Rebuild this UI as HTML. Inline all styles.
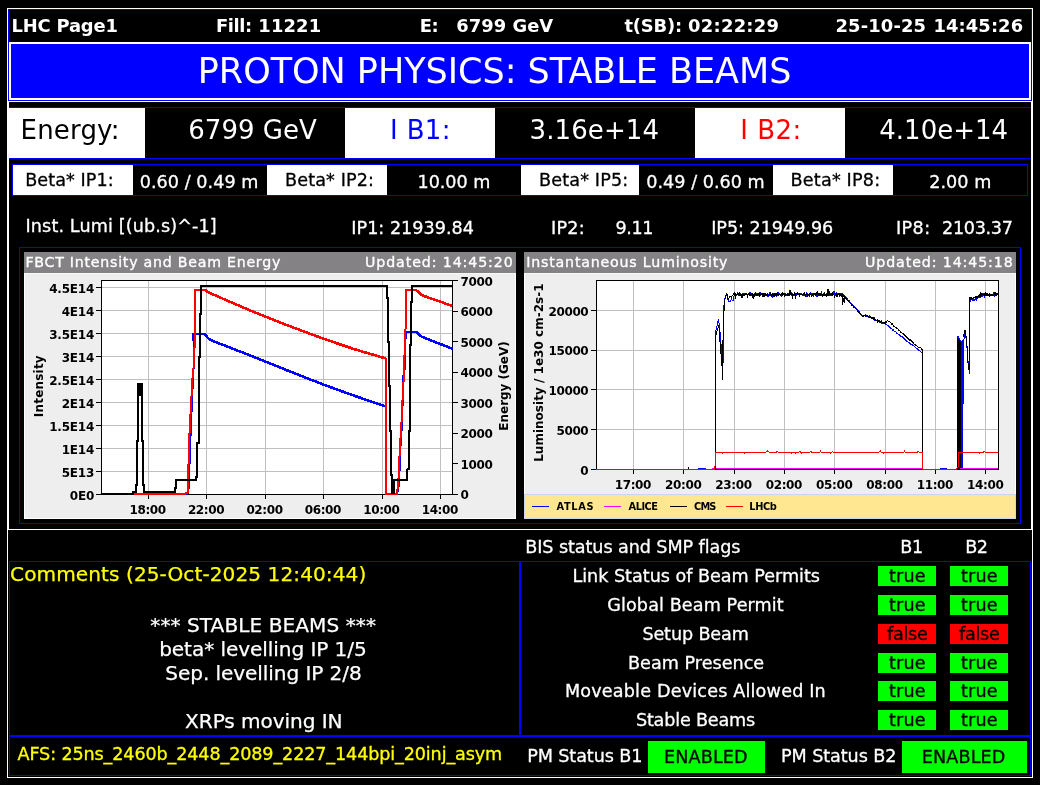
<!DOCTYPE html>
<html lang="en"><head><meta charset="utf-8"><title>LHC Page1</title>
<style>
html,body{margin:0;padding:0;background:#000;overflow:hidden}
svg{display:block;font-family:"DejaVu Sans","Liberation Sans",sans-serif;will-change:transform}
svg text{white-space:pre}
svg rect, svg .c{shape-rendering:crispEdges}
</style></head><body>
<svg width="1040" height="785" viewBox="0 0 1040 785">
<rect width="1040" height="785" fill="#000"/>
<path fill="#fff" fill-rule="evenodd" d="M7 8H1033V778H7Z M8 9H1032V777H8Z"/>
<path fill="#0000ff" fill-rule="evenodd" d="M8 9H1032V101H8Z M9 10H1031V100H9Z"/>
<text x="11.55" y="32" font-size="17.9" fill="#fff" font-weight="bold" letter-spacing="-0.188">LHC Page1</text>
<text x="215.95" y="32" font-size="17.9" fill="#fff" font-weight="bold" letter-spacing="-0.375">Fill:</text>
<text x="258.3" y="32" font-size="17.9" fill="#fff" font-weight="bold" letter-spacing="0.15">11221</text>
<text x="419.65" y="32" font-size="17.9" fill="#fff" font-weight="bold" letter-spacing="-0.45">E:</text>
<text x="456.35" y="32" font-size="17.9" fill="#fff" font-weight="bold" letter-spacing="0.014">6799 GeV</text>
<text x="624.45" y="32" font-size="17.9" fill="#fff" font-weight="bold" letter-spacing="-0.18">t(SB):</text>
<text x="688.1" y="32" font-size="17.9" fill="#fff" font-weight="bold" letter-spacing="0.258">02:22:29</text>
<text x="835.55" y="32" font-size="17.9" fill="#fff" font-weight="bold" letter-spacing="0.129">25-10-25</text>
<text x="933.5" y="32" font-size="17.9" fill="#fff" font-weight="bold" letter-spacing="0.086">14:45:26</text>
<path fill="#fff" fill-rule="evenodd" d="M9 42H1031V100H9Z M11 44H1029V98H11Z"/>
<rect x="11" y="44" width="1018" height="54" fill="#0000ff"/>
<text x="197.75" y="83" font-size="35" fill="#fff" letter-spacing="-0.019">PROTON PHYSICS: STABLE BEAMS</text>
<path fill="#fff" fill-rule="evenodd" d="M8 101H1032V530H8Z M9 102H1031V529H9Z"/>
<rect x="9" y="107" width="1022" height="1" fill="#0000ff"/>
<rect x="9" y="158" width="1022" height="1" fill="#0000ff"/>
<rect x="9" y="108" width="136" height="50" fill="#fff"/>
<rect x="345" y="108" width="150" height="50" fill="#fff"/>
<rect x="695" y="108" width="150" height="50" fill="#fff"/>
<text x="20.55" y="139" font-size="26" fill="#000" letter-spacing="0.183">Energy:</text>
<text x="188.3" y="139" font-size="26" fill="#fff" letter-spacing="0.028">6799 GeV</text>
<text x="390.0" y="139" font-size="26" fill="#0000ff" letter-spacing="0.35">I B1:</text>
<text x="529.55" y="139" font-size="26" fill="#fff" letter-spacing="0.101">3.16e+14</text>
<text x="740.25" y="139" font-size="26" fill="#f00" letter-spacing="0.5">I B2:</text>
<text x="879.25" y="139" font-size="26" fill="#fff" letter-spacing="0.014">4.10e+14</text>
<path fill="#0000ff" fill-rule="evenodd" d="M12 164H1028V196H12Z M13 165H1027V195H13Z"/>
<rect x="13" y="165" width="120" height="30" fill="#fff"/>
<rect x="267" y="165" width="120" height="30" fill="#fff"/>
<rect x="521" y="165" width="118" height="30" fill="#fff"/>
<rect x="773" y="165" width="120" height="30" fill="#fff"/>
<text x="25.17" y="186" font-size="17.6" fill="#000" stroke="#000" stroke-width="0.3" letter-spacing="0.06">Beta* IP1:</text>
<text x="285.1" y="186" font-size="17.6" fill="#000" stroke="#000" stroke-width="0.3" letter-spacing="0.111">Beta* IP2:</text>
<text x="539.05" y="186" font-size="17.6" fill="#000" stroke="#000" stroke-width="0.3" letter-spacing="0.144">Beta* IP5:</text>
<text x="790.6" y="186" font-size="17.6" fill="#000" stroke="#000" stroke-width="0.3" letter-spacing="0.177">Beta* IP8:</text>
<text x="139.7" y="188" font-size="17.6" fill="#fff" stroke="#fff" stroke-width="0.3" letter-spacing="0.051">0.60 / 0.49 m</text>
<text x="417.6" y="188" font-size="17.6" fill="#fff" stroke="#fff" stroke-width="0.3" letter-spacing="-0.067">10.00 m</text>
<text x="646.3" y="188" font-size="17.6" fill="#fff" stroke="#fff" stroke-width="0.3" letter-spacing="0.016">0.49 / 0.60 m</text>
<text x="929.2" y="188" font-size="17.6" fill="#fff" stroke="#fff" stroke-width="0.3" letter-spacing="0.04">2.00 m</text>
<text x="25.55" y="232" font-size="17.6" fill="#fff" stroke="#fff" stroke-width="0.3" letter-spacing="0.119">Inst. Lumi [(ub.s)^-1]</text>
<text x="351.3" y="234" font-size="17.6" fill="#fff" stroke="#fff" stroke-width="0.3" letter-spacing="0.016">IP1: 21939.84</text>
<text x="551.1" y="234" font-size="17.6" fill="#fff" stroke="#fff" stroke-width="0.3" letter-spacing="0.2">IP2:</text>
<text x="615.6" y="234" font-size="17.6" fill="#fff" stroke="#fff" stroke-width="0.3" letter-spacing="-0.45">9.11</text>
<text x="711.2" y="234" font-size="17.6" fill="#fff" stroke="#fff" stroke-width="0.3" letter-spacing="-0.033">IP5: 21949.96</text>
<text x="895.95" y="234" font-size="17.6" fill="#fff" stroke="#fff" stroke-width="0.3" letter-spacing="0.433">IP8:</text>
<text x="942.0" y="234" font-size="17.6" fill="#fff" stroke="#fff" stroke-width="0.3" letter-spacing="-0.3">2103.37</text>
<path fill="#0000ff" fill-rule="evenodd" d="M19 247H1021V524H19Z M20 248H1020V523H20Z"/>
<rect x="24" y="252" width="492" height="21" fill="#848284"/>
<rect x="24" y="273" width="492" height="246" fill="#eeeeee"/>
<rect x="24" y="273" width="1" height="246" fill="#fff"/>
<rect x="515" y="273" width="1" height="246" fill="#fff"/>
<rect x="24" y="518" width="492" height="1" fill="#fff"/>
<rect x="24" y="273" width="492" height="1" fill="#f8f8f8"/>
<rect x="524" y="252" width="492" height="21" fill="#848284"/>
<rect x="524" y="273" width="492" height="246" fill="#eeeeee"/>
<rect x="524" y="273" width="1" height="246" fill="#fff"/>
<rect x="1015" y="273" width="1" height="246" fill="#fff"/>
<rect x="524" y="518" width="492" height="1" fill="#fff"/>
<rect x="524" y="273" width="492" height="1" fill="#f8f8f8"/>
<text x="25.4" y="267" font-size="14.2" fill="#fff" stroke="#fff" stroke-width="0.35" letter-spacing="0.745">FBCT Intensity and Beam Energy</text>
<text x="365.05" y="267" font-size="14.2" fill="#fff" stroke="#fff" stroke-width="0.35" letter-spacing="0.893">Updated: 14:45:20</text>
<text x="526.25" y="267" font-size="14.2" fill="#fff" stroke="#fff" stroke-width="0.35" letter-spacing="0.804">Instantaneous Luminosity</text>
<text x="865.05" y="267" font-size="14.2" fill="#fff" stroke="#fff" stroke-width="0.35" letter-spacing="0.893">Updated: 14:45:18</text>
<clipPath id="clipL"><rect x="101" y="281" width="351.6" height="214.4"/></clipPath>
<rect x="101" y="280" width="352" height="215" fill="#fff"/>
<rect x="101" y="471" width="351" height="1" fill="#c0c0c0"/>
<rect x="101" y="448" width="351" height="1" fill="#c0c0c0"/>
<rect x="101" y="425" width="351" height="1" fill="#c0c0c0"/>
<rect x="101" y="402" width="351" height="1" fill="#c0c0c0"/>
<rect x="101" y="379" width="351" height="1" fill="#c0c0c0"/>
<rect x="101" y="356" width="351" height="1" fill="#c0c0c0"/>
<rect x="101" y="333" width="351" height="1" fill="#c0c0c0"/>
<rect x="101" y="310" width="351" height="1" fill="#c0c0c0"/>
<rect x="101" y="287" width="351" height="1" fill="#c0c0c0"/>
<rect x="148" y="280" width="1" height="214" fill="#c0c0c0"/>
<rect x="206" y="280" width="1" height="214" fill="#c0c0c0"/>
<rect x="265" y="280" width="1" height="214" fill="#c0c0c0"/>
<rect x="323" y="280" width="1" height="214" fill="#c0c0c0"/>
<rect x="382" y="280" width="1" height="214" fill="#c0c0c0"/>
<rect x="440" y="280" width="1" height="214" fill="#c0c0c0"/>
<path fill="#000" fill-rule="evenodd" d="M101 280H453V495H101Z M102 281H452V494H102Z"/>
<g clip-path="url(#clipL)">
<polyline class="c" points="134,494.3 187.4,494.3 189.0,486 189.8,452 190.7,432 191.7,408 193.0,378 193.8,364.7 194.0,340 193.4,340 193.4,333.7 204.7,333.7 207,336.8 209.1,339.2 213,341 250,355.4 290,371.5 323.7,384.7 355,396 385.6,406.4 385.6,494.3 397,494.3 399,484 400.4,448 401.9,424.6 402.9,393.8 403.4,376 404.4,372 405.4,350 405.6,332 416.4,332 419,334.8 422,336.9 452.5,348.8" fill="none" stroke="#0000ff" stroke-width="2" stroke-linejoin="miter"/>
<polyline class="c" points="204.7,333.7 207,336.8 209.1,339.2 213,341 250,355.4 290,371.5 323.7,384.7 355,396 385.6,406.4" fill="none" stroke="#0000ff" stroke-width="2.6" stroke-linejoin="miter"/>
<polyline class="c" points="416.4,332 419,334.8 422,336.9 452.5,348.8" fill="none" stroke="#0000ff" stroke-width="2.6" stroke-linejoin="miter"/>
<polyline class="c" points="134,494.3 183,494.3 187.5,492.8 188.3,482.8 188.7,447.8 189.7,429.3 191,405 192.5,378 193.8,364.7 194.8,340.5 194.9,289.7 204.7,289.7 209.1,292.7 250,310.4 290,326.3 323.7,338.8 355,349.4 385.6,358.4 385.6,494.3 397,494.3 398.4,480.2 399.9,448 401.4,424.6 402.8,393.8 403,388 404,376 404.9,339 405.8,324.3 405.9,290.3 416.4,290.3 419.5,293.2 422.7,295.5 452.5,306" fill="none" stroke="#ff0000" stroke-width="2" stroke-linejoin="miter"/>
<polyline class="c" points="204.7,289.7 209.1,292.7 250,310.4 290,326.3 323.7,338.8 355,349.4 385.6,358.4" fill="none" stroke="#ff0000" stroke-width="2.6" stroke-linejoin="miter"/>
<polyline class="c" points="416.4,290.3 419.5,293.2 422.7,295.5 452.5,306" fill="none" stroke="#ff0000" stroke-width="2.6" stroke-linejoin="miter"/>
<polyline class="c" points="102,494.3 132.6,494.3 132.6,491.8 135.8,491.8 135.8,484.5 136.9,484.5 136.9,440.6 138,440.6 138,384 142,384 142,440.6 143.1,440.6 143.1,484.5 144.3,484.5 144.3,491.8 174.7,491.8 174.7,488 176,488 176,480 196.1,480 196.1,476.5 197.4,476.5 197.4,443.3 198.6,443.3 198.6,400 198.9,400 198.9,357 200,357 200,314.3 201.1,314.3 201.1,286.3 386.9,286.3 386.9,297.6 388,297.6 388,341.8 389,341.8 389,386 389.7,386 389.7,431 390.8,431 390.8,475 392.3,475 392.3,493 393.6,493 393.6,480.2 407.2,480.2 407.5,469.2 408.8,469.2 409,431 409.8,431 409.8,388 410.2,388 410.2,345.3 410.9,345.3 410.9,301.8 411.9,301.8 411.9,286.3 452.5,286.3" fill="none" stroke="#000" stroke-width="2" stroke-linejoin="miter"/>
<rect x="138" y="384" width="4" height="12" fill="#000"/>
<rect x="392" y="482" width="2" height="12" fill="#000"/>
</g>
<rect x="96" y="494" width="5" height="1" fill="#000"/>
<text x="94.1" y="499.5" font-size="12" fill="#000" font-weight="bold" text-anchor="end" letter-spacing="-0.2">0E0</text>
<rect x="96" y="471" width="5" height="1" fill="#000"/>
<text x="94.1" y="476.5" font-size="12" fill="#000" font-weight="bold" text-anchor="end" letter-spacing="-0.2">5E13</text>
<rect x="96" y="448" width="5" height="1" fill="#000"/>
<text x="94.1" y="453.5" font-size="12" fill="#000" font-weight="bold" text-anchor="end" letter-spacing="-0.2">1E14</text>
<rect x="96" y="425" width="5" height="1" fill="#000"/>
<text x="94.1" y="430.5" font-size="12" fill="#000" font-weight="bold" text-anchor="end" letter-spacing="-0.2">1.5E14</text>
<rect x="96" y="402" width="5" height="1" fill="#000"/>
<text x="94.1" y="407.5" font-size="12" fill="#000" font-weight="bold" text-anchor="end" letter-spacing="-0.2">2E14</text>
<rect x="96" y="379" width="5" height="1" fill="#000"/>
<text x="94.1" y="384.5" font-size="12" fill="#000" font-weight="bold" text-anchor="end" letter-spacing="-0.2">2.5E14</text>
<rect x="96" y="356" width="5" height="1" fill="#000"/>
<text x="94.1" y="361.5" font-size="12" fill="#000" font-weight="bold" text-anchor="end" letter-spacing="-0.2">3E14</text>
<rect x="96" y="333" width="5" height="1" fill="#000"/>
<text x="94.1" y="338.5" font-size="12" fill="#000" font-weight="bold" text-anchor="end" letter-spacing="-0.2">3.5E14</text>
<rect x="96" y="310" width="5" height="1" fill="#000"/>
<text x="94.1" y="315.5" font-size="12" fill="#000" font-weight="bold" text-anchor="end" letter-spacing="-0.2">4E14</text>
<rect x="96" y="287" width="5" height="1" fill="#000"/>
<text x="94.1" y="292.5" font-size="12" fill="#000" font-weight="bold" text-anchor="end" letter-spacing="-0.2">4.5E14</text>
<rect x="453" y="494" width="5" height="1" fill="#000"/>
<text x="460.6" y="499.4" font-size="12" fill="#000" font-weight="bold" letter-spacing="-0.4">0</text>
<rect x="453" y="463" width="5" height="1" fill="#000"/>
<text x="460.6" y="468.9" font-size="12" fill="#000" font-weight="bold" letter-spacing="-0.4">1000</text>
<rect x="453" y="433" width="5" height="1" fill="#000"/>
<text x="460.6" y="438.4" font-size="12" fill="#000" font-weight="bold" letter-spacing="-0.4">2000</text>
<rect x="453" y="402" width="5" height="1" fill="#000"/>
<text x="460.6" y="407.9" font-size="12" fill="#000" font-weight="bold" letter-spacing="-0.4">3000</text>
<rect x="453" y="372" width="5" height="1" fill="#000"/>
<text x="460.6" y="377.4" font-size="12" fill="#000" font-weight="bold" letter-spacing="-0.4">4000</text>
<rect x="453" y="341" width="5" height="1" fill="#000"/>
<text x="460.6" y="346.9" font-size="12" fill="#000" font-weight="bold" letter-spacing="-0.4">5000</text>
<rect x="453" y="311" width="5" height="1" fill="#000"/>
<text x="460.6" y="316.4" font-size="12" fill="#000" font-weight="bold" letter-spacing="-0.4">6000</text>
<rect x="453" y="280" width="5" height="1" fill="#000"/>
<text x="460.6" y="285.9" font-size="12" fill="#000" font-weight="bold" letter-spacing="-0.4">7000</text>
<rect x="148" y="495" width="1" height="4" fill="#000"/>
<text x="147.6" y="513.7" font-size="12" fill="#000" font-weight="bold" text-anchor="middle" letter-spacing="-0.4">18:00</text>
<rect x="206" y="495" width="1" height="4" fill="#000"/>
<text x="206.0" y="513.7" font-size="12" fill="#000" font-weight="bold" text-anchor="middle" letter-spacing="-0.4">22:00</text>
<rect x="265" y="495" width="1" height="4" fill="#000"/>
<text x="264.5" y="513.7" font-size="12" fill="#000" font-weight="bold" text-anchor="middle" letter-spacing="-0.4">02:00</text>
<rect x="323" y="495" width="1" height="4" fill="#000"/>
<text x="322.9" y="513.7" font-size="12" fill="#000" font-weight="bold" text-anchor="middle" letter-spacing="-0.4">06:00</text>
<rect x="382" y="495" width="1" height="4" fill="#000"/>
<text x="381.4" y="513.7" font-size="12" fill="#000" font-weight="bold" text-anchor="middle" letter-spacing="-0.4">10:00</text>
<rect x="440" y="495" width="1" height="4" fill="#000"/>
<text x="439.8" y="513.7" font-size="12" fill="#000" font-weight="bold" text-anchor="middle" letter-spacing="-0.4">14:00</text>
<text transform="translate(42.5 417.25) rotate(-90)" font-size="12" fill="#000" font-weight="bold" letter-spacing="0.211">Intensity</text>
<text transform="translate(508 430.7) rotate(-90)" font-size="12" fill="#000" font-weight="bold" letter-spacing="-0.017">Energy (GeV)</text>
<clipPath id="clipR"><rect x="596" y="281" width="402.4" height="189"/></clipPath>
<rect x="596" y="280" width="403" height="190" fill="#fff"/>
<rect x="596" y="429" width="402" height="1" fill="#c0c0c0"/>
<rect x="596" y="389" width="402" height="1" fill="#c0c0c0"/>
<rect x="596" y="350" width="402" height="1" fill="#c0c0c0"/>
<rect x="596" y="310" width="402" height="1" fill="#c0c0c0"/>
<rect x="633" y="280" width="1" height="189" fill="#c0c0c0"/>
<rect x="683" y="280" width="1" height="189" fill="#c0c0c0"/>
<rect x="734" y="280" width="1" height="189" fill="#c0c0c0"/>
<rect x="784" y="280" width="1" height="189" fill="#c0c0c0"/>
<rect x="834" y="280" width="1" height="189" fill="#c0c0c0"/>
<rect x="885" y="280" width="1" height="189" fill="#c0c0c0"/>
<rect x="935" y="280" width="1" height="189" fill="#c0c0c0"/>
<rect x="985" y="280" width="1" height="189" fill="#c0c0c0"/>
<path fill="#000" fill-rule="evenodd" d="M596 280H999V470H596Z M597 281H998V469H597Z"/>
<g clip-path="url(#clipR)">
<polyline class="c" points="596,469.5 698,469.5 698,468.5 705,468.5 705,469.5 715.0,469.5 715.0,334 716.5,328 718.5,319.3 719.8,330 721,344 722.2,362 722.8,378 723.4,336 723.4,316 724.3,300 726.5,294.5 728.3,301 730,302 731.5,299 733,301 734.4,294.5 734.4,294.68 734.8,295.6 735.2,296.15 735.6,294.39 736.0,295.5 736.4,294.58 736.8,294.31 737.2,294.25 737.6,293.3 738.0,294.41 738.4,294.66 738.8,295.5 739.2,294.28 739.6,292.99 740.0,293.46 740.4,295.48 740.8,294.86 741.2,294.35 741.6,295.44 742.0,294.42 742.4,293.81 742.8,294.56 743.2,293.1 743.6,293.73 744.0,296.12 744.4,292.67 744.8,295.92 745.2,293.01 745.6,294.48 746.0,294.06 746.4,294.54 746.8,294.88 747.2,295.82 747.6,295.36 748.0,294.23 748.4,294.04 748.8,293.73 749.2,294.08 749.6,292.52 750.0,292.34 750.4,294.44 750.8,295.2 751.2,294.2 751.6,295.24 752.0,293.45 752.4,295.73 752.8,294.44 753.2,294.26 753.6,294.45 754.0,295.72 754.4,294.03 754.8,294.84 755.2,295.17 755.6,292.3 756.0,294.24 756.4,294.37 756.8,293.52 757.2,296.03 757.6,293.53 758.0,296.42 758.4,293.57 758.8,294.89 759.2,294.31 759.6,295.31 760.0,291.8 760.4,295.56 760.8,294.8 761.2,294.04 761.6,294.48 762.0,294.25 762.4,295.03 762.8,293.86 763.2,294.0 763.6,295.59 764.0,294.66 764.4,295.0 764.8,295.13 765.2,293.17 765.6,295.0 766.0,293.53 766.4,295.06 766.8,295.08 767.2,294.13 767.6,295.28 768.0,297.07 768.4,294.38 768.8,294.56 769.2,294.4 769.6,294.57 770.0,292.54 770.4,295.62 770.8,293.39 771.2,294.61 771.6,294.81 772.0,295.13 772.4,298.42 772.8,294.92 773.2,295.2 773.6,292.98 774.0,295.58 774.4,294.58 774.8,296.19 775.2,294.28 775.6,295.03 776.0,295.27 776.4,295.85 776.8,294.64 777.2,294.51 777.6,295.21 778.0,294.8 778.4,293.8 778.8,292.75 779.2,294.85 779.6,292.66 780.0,294.13 780.4,294.63 780.8,294.08 781.2,295.04 781.6,296.52 782.0,294.78 782.4,295.46 782.8,294.84 783.2,294.44 783.6,294.42 784.0,293.66 784.4,293.63 784.8,294.47 785.2,294.67 785.6,293.38 786.0,293.83 786.4,295.3 786.8,294.72 787.2,294.88 787.6,294.3 788.0,294.42 788.4,293.05 788.8,295.14 789.2,295.04 789.6,294.41 790.0,293.71 790.4,293.58 790.8,294.42 791.2,294.91 791.6,291.76 792.0,295.62 792.4,292.91 792.8,295.93 793.2,294.91 793.6,295.64 794.0,295.43 794.4,294.14 794.8,295.52 795.2,294.86 795.6,295.15 796.0,294.0 796.4,295.07 796.8,294.31 797.2,294.76 797.6,293.47 798.0,295.29 798.4,294.65 798.8,293.4 799.2,293.54 799.6,293.26 800.0,294.58 800.4,292.82 800.8,294.5 801.2,294.1 801.6,294.0 802.0,294.24 802.4,295.24 802.8,294.41 803.2,295.24 803.6,293.76 804.0,295.5 804.4,294.73 804.8,294.15 805.2,295.14 805.6,295.51 806.0,294.55 806.4,295.35 806.8,293.32 807.2,294.31 807.6,293.05 808.0,295.47 808.4,294.38 808.8,294.36 809.2,293.42 809.6,294.63 810.0,295.12 810.4,294.16 810.8,293.08 811.2,295.06 811.6,294.08 812.0,294.9 812.4,294.78 812.8,293.95 813.2,297.26 813.6,294.37 814.0,294.82 814.4,294.19 814.8,294.63 815.2,295.36 815.6,294.99 816.0,294.59 816.4,295.58 816.8,294.01 817.2,295.24 817.6,295.99 818.0,294.09 818.4,294.05 818.8,295.48 819.2,294.32 819.6,294.58 820.0,294.54 820.4,293.45 820.8,293.36 821.2,295.9 821.6,292.92 822.0,293.94 822.4,294.01 822.8,294.93 823.2,294.85 823.6,293.37 824.0,293.61 824.4,294.25 824.8,294.57 825.2,294.86 825.6,294.44 826.0,295.82 826.4,295.42 826.8,294.3 827.2,291.96 827.6,294.63 828.0,294.17 828.4,293.66 828.8,294.27 829.2,293.62 829.6,295.02 830.0,294.56 830.4,294.9 830.8,293.64 831.2,295.12 831.6,294.04 832.0,293.83 832.4,294.88 832.8,295.17 833.2,294.22 833.6,294.15 834.0,290.73 834.4,295.97 834.8,294.62 835.2,293.72 835.6,294.47 836.0,295.52 836.4,294.82 836.8,292.75 837.2,293.79 837.6,294.89 838.0,293.52 838.4,294.63 838.8,294.92 839.2,293.88 839.6,296.05 840.0,295.28 840.4,293.76 840.8,294.55 841.2,293.87 841.6,295.15 842.0,293.94 842.4,294.65 842.8,293.97 843.2,294.5 843.6,294.87 844.0,295.38 844.4,295.9 844.8,296.01 845.2,296.25 845.6,296.66 846.0,297.57 846.4,297.75 846.8,298.53 847.2,298.72 847.6,298.9 848.0,299.8 848.4,300.48 848.8,300.41 849.2,300.66 849.6,301.12 850.0,301.97 850.4,302.05 850.8,302.53 851.2,303.22 851.6,303.5 852.0,303.96 852.4,304.23 852.8,304.65 853.2,305.27 853.6,305.71 854.0,306.25 854.4,306.42 854.8,307.06 855.2,307.52 855.6,307.86 856.0,308.42 856.4,308.96 856.8,309.2 857.2,309.6 857.6,309.79 858.0,310.53 858.4,310.87 858.8,311.25 859.2,311.56 859.6,312.33 860.0,313.24 860.4,313.17 860.8,313.52 861.2,314.04 861.6,314.23 862.0,314.83 862.4,315.08 862.8,315.52 863.2,317.04 863.6,316.65 864.0,316.08 864.4,315.32 864.8,315.54 865.2,314.68 865.6,315.89 866.0,315.43 866.4,315.8 866.8,316.41 867.2,316.45 867.6,315.59 868.0,316.35 868.4,316.86 868.8,316.22 869.2,315.65 869.6,317.13 870.0,317.32 870.4,317.75 870.8,317.73 871.2,317.93 871.6,318.16 872.0,318.97 872.4,318.64 872.8,318.85 873.2,318.49 873.6,319.51 874.0,318.95 874.4,319.64 874.8,318.22 875.2,319.71 875.6,319.69 876.0,319.66 876.4,320.81 876.8,320.48 877.2,320.35 877.6,320.31 878.0,321.82 878.4,321.36 878.8,321.48 879.2,320.86 879.6,322.19 880.0,321.94 880.4,321.65 880.8,321.91 881.2,321.23 881.6,322.68 882.0,321.88 882.4,323.13 882.8,322.58 883.2,322.65 883.6,323.38 884.0,323.46 884.4,322.88 884.8,323.64 885.2,324.2 885.6,323.99 886.0,323.7 886.4,324.63 886.8,324.54 887.2,325.07 887.6,325.73 888.0,325.99 888.4,326.21 888.8,325.72 889.2,327.15 889.6,327.16 890.0,327.36 890.4,327.93 890.8,328.67 891.2,328.21 891.6,328.45 892.0,329.33 892.4,329.27 892.8,330.09 893.2,329.85 893.6,330.29 894.0,330.92 894.4,331.25 894.8,331.45 895.2,331.77 895.6,331.94 896.0,332.18 896.4,332.55 896.8,333.21 897.2,333.39 897.6,333.54 898.0,333.93 898.4,334.36 898.8,334.76 899.2,334.76 899.6,335.09 900.0,335.5 900.4,336.35 900.8,336.1 901.2,336.66 901.6,336.31 902.0,337.19 902.4,336.96 902.8,337.35 903.2,337.77 903.6,338.21 904.0,338.6 904.4,338.95 904.8,339.23 905.2,339.39 905.6,340.42 906.0,340.21 906.4,340.59 906.8,341.23 907.2,341.29 907.6,341.51 908.0,341.76 908.4,342.45 908.8,342.06 909.2,342.4 909.6,342.98 910.0,342.77 910.4,343.38 910.8,344.15 911.2,344.08 911.6,344.55 912.0,344.99 912.4,344.86 912.8,345.51 913.2,345.61 913.6,345.81 914.0,346.32 914.4,346.69 914.8,346.92 915.2,347.17 915.6,347.87 916.0,348.23 916.4,348.4 916.8,348.56 917.2,348.65 917.6,349.01 918.0,349.26 918.4,349.89 918.8,350.37 919.2,350.68 919.6,350.77 920.0,351.0 920.4,351.45 920.8,351.75 921.2,352.17 921.6,352.69 922.0,352.49 922.4,353.47 921.8,352.5 922.3,352.5 922.3,469.5 940,469.5 940,468.5 946,468.5 946,469.5 957.2,469.5" fill="none" stroke="#0000ff" stroke-width="1" stroke-linejoin="miter"/>
<path class="c" fill="#0000ff" d="M957.2 469V336L958 335.3L959.5 338L961 341.5L962 340.4H963.9V403.7H963.1V467.5H957.2Z"/>
<polyline class="c" points="963.9,340 964.8,333 966.1,338 967.4,352 968.3,365 969.5,374 969.5,359 969.6,300 969.8,299.6 970.2,300.89 970.6,301.3 971.0,299.79 971.4,298.91 971.8,299.9 972.2,300.24 972.6,300.65 973.0,298.42 973.4,298.2 973.8,299.85 974.2,299.5 974.6,300.3 975.0,299.66 975.4,298.53 975.8,298.23 976.2,300.64 976.6,297.92 977.0,297.33 977.4,296.86 977.8,297.82 978.2,297.72 978.6,297.13 979.0,297.24 979.4,297.39 979.8,297.62 980.2,297.84 980.6,296.89 981.0,294.94 981.4,297.04 981.8,294.98 982.2,295.95 982.6,294.63 983.0,295.81 983.4,293.8 983.8,294.69 984.2,297.47 984.6,294.46 985.0,295.26 985.4,293.31 985.8,294.24 986.2,295.1 986.6,294.42 987.0,294.83 987.4,294.59 987.8,293.59 988.2,295.01 988.6,293.77 989.0,296.18 989.4,294.05 989.8,295.12 990.2,294.5 990.6,295.36 991.0,293.96 991.4,295.4 991.8,294.39 992.2,295.64 992.6,295.06 993.0,294.63 993.4,293.8 993.8,295.19 994.2,294.92 994.6,295.98 995.0,294.16 995.4,295.0 995.8,294.96 996.2,294.75 996.6,294.69 997.0,294.66 997.4,293.96 997.8,293.59 998.2,294.14" fill="none" stroke="#0000ff" stroke-width="1" stroke-linejoin="miter"/>
<rect x="712" y="468" width="210" height="1" fill="#ff00ff"/>
<rect x="958" y="468" width="40" height="1" fill="#ff00ff"/>
<polyline class="c" points="596,469.5 688.0,469.5 688.5,468.4 689,469.5 715.3,469.5 715.3,337.6 717,331 718.7,325.4 719.6,334 720.3,346.8 721.9,363.6 722.6,380.4 723.0,340 723.5,320 724.5,302.5 725.6,296 726.8,293.3 727.5,297 728.3,299.4 729.8,296.5 731.3,297.1 732.8,295 734.4,293.3 734.4,293.54 734.8,293.57 735.2,298.52 735.6,292.57 736.0,295.1 736.4,294.77 736.8,294.29 737.2,294.88 737.6,294.12 738.0,294.91 738.4,294.63 738.8,294.25 739.2,291.81 739.6,296.38 740.0,294.99 740.4,295.28 740.8,294.2 741.2,294.2 741.6,298.3 742.0,294.41 742.4,295.3 742.8,297.54 743.2,294.13 743.6,295.21 744.0,294.05 744.4,294.7 744.8,295.4 745.2,294.33 745.6,293.84 746.0,295.03 746.4,294.27 746.8,293.39 747.2,294.64 747.6,296.26 748.0,295.13 748.4,294.17 748.8,294.77 749.2,293.76 749.6,295.21 750.0,294.52 750.4,295.03 750.8,295.18 751.2,294.3 751.6,293.89 752.0,294.46 752.4,293.84 752.8,295.67 753.2,299.35 753.6,293.69 754.0,294.86 754.4,295.63 754.8,294.81 755.2,294.35 755.6,292.41 756.0,295.35 756.4,295.2 756.8,294.33 757.2,295.55 757.6,295.58 758.0,294.45 758.4,293.86 758.8,294.7 759.2,292.68 759.6,296.48 760.0,293.78 760.4,294.6 760.8,294.96 761.2,292.83 761.6,294.82 762.0,293.23 762.4,293.68 762.8,295.66 763.2,294.77 763.6,293.23 764.0,297.05 764.4,293.64 764.8,294.34 765.2,295.63 765.6,294.48 766.0,295.42 766.4,295.09 766.8,294.34 767.2,294.07 767.6,295.21 768.0,294.87 768.4,295.41 768.8,295.78 769.2,295.24 769.6,295.6 770.0,294.18 770.4,292.89 770.8,294.01 771.2,295.0 771.6,295.73 772.0,294.63 772.4,294.03 772.8,295.14 773.2,294.53 773.6,295.61 774.0,294.39 774.4,293.81 774.8,295.67 775.2,294.43 775.6,293.75 776.0,295.71 776.4,293.18 776.8,295.71 777.2,294.35 777.6,292.4 778.0,294.42 778.4,295.24 778.8,295.27 779.2,294.09 779.6,294.71 780.0,294.75 780.4,295.06 780.8,294.13 781.2,293.85 781.6,293.83 782.0,294.4 782.4,292.37 782.8,295.66 783.2,294.37 783.6,293.74 784.0,293.37 784.4,293.78 784.8,296.75 785.2,294.87 785.6,294.72 786.0,294.75 786.4,294.61 786.8,294.86 787.2,293.46 787.6,294.74 788.0,295.62 788.4,294.84 788.8,294.37 789.2,295.62 789.6,295.81 790.0,290.09 790.4,293.8 790.8,294.43 791.2,293.77 791.6,294.79 792.0,295.27 792.4,294.76 792.8,299.15 793.2,293.87 793.6,295.85 794.0,294.22 794.4,293.25 794.8,294.81 795.2,293.12 795.6,298.59 796.0,293.99 796.4,293.78 796.8,293.96 797.2,292.82 797.6,293.6 798.0,295.11 798.4,294.56 798.8,294.98 799.2,294.12 799.6,295.43 800.0,294.14 800.4,294.64 800.8,294.8 801.2,294.21 801.6,294.33 802.0,293.67 802.4,294.71 802.8,294.28 803.2,293.8 803.6,293.34 804.0,295.27 804.4,292.09 804.8,293.76 805.2,293.99 805.6,295.91 806.0,295.08 806.4,292.62 806.8,294.53 807.2,294.51 807.6,295.74 808.0,294.12 808.4,294.55 808.8,294.55 809.2,294.04 809.6,295.75 810.0,295.28 810.4,294.05 810.8,294.23 811.2,296.49 811.6,296.04 812.0,295.9 812.4,294.2 812.8,295.91 813.2,294.37 813.6,294.0 814.0,294.01 814.4,293.97 814.8,294.05 815.2,295.23 815.6,293.46 816.0,295.25 816.4,293.73 816.8,294.54 817.2,290.81 817.6,292.49 818.0,294.73 818.4,293.92 818.8,294.94 819.2,294.15 819.6,295.5 820.0,296.24 820.4,295.38 820.8,294.19 821.2,294.46 821.6,294.49 822.0,294.39 822.4,294.61 822.8,297.26 823.2,295.02 823.6,294.45 824.0,293.94 824.4,293.31 824.8,295.24 825.2,294.7 825.6,295.44 826.0,294.46 826.4,294.3 826.8,296.03 827.2,294.68 827.6,295.94 828.0,288.97 828.4,295.63 828.8,294.71 829.2,294.8 829.6,292.64 830.0,293.75 830.4,294.73 830.8,294.23 831.2,293.95 831.6,293.77 832.0,295.09 832.4,293.75 832.8,295.16 833.2,294.42 833.6,294.85 834.0,295.21 834.4,296.83 834.8,295.96 835.2,294.44 835.6,293.35 836.0,293.24 836.4,295.31 836.8,296.11 837.2,294.72 837.6,295.74 838.0,294.6 838.4,294.73 838.8,293.91 839.2,293.61 839.6,294.37 840.0,295.91 840.4,294.33 840.8,294.61 841.2,296.0 841.6,294.86 842.0,294.37 842.4,294.6 842.8,294.92 843.2,295.22 843.6,296.42 844.0,296.27 844.4,296.71 844.8,297.36 845.2,297.86 845.6,297.98 846.0,298.35 846.4,299.11 846.8,299.36 847.2,300.09 847.6,300.45 848.0,300.36 848.4,300.93 848.8,301.4 849.2,302.02 849.6,302.08 850.0,302.76 850.4,303.52 850.8,303.7 851.2,304.06 851.6,304.43 852.0,305.45 852.4,305.86 852.8,305.93 853.2,305.98 853.6,306.64 854.0,307.77 854.4,307.87 854.8,308.01 855.2,308.54 855.6,308.97 856.0,309.18 856.4,309.84 856.8,310.03 857.2,310.47 857.6,311.23 858.0,311.43 858.4,311.59 858.8,312.09 859.2,313.04 859.6,313.56 860.0,313.37 860.4,314.18 860.8,314.35 861.2,315.19 861.6,315.42 862.0,316.16 862.4,316.28 862.8,316.75 863.2,316.72 863.6,316.2 864.0,315.43 864.4,315.89 864.8,315.72 865.2,315.29 865.6,316.02 866.0,314.86 866.4,315.81 866.8,316.0 867.2,316.53 867.6,316.06 868.0,316.32 868.4,316.09 868.8,316.42 869.2,317.09 869.6,317.4 870.0,316.86 870.4,316.45 870.8,317.58 871.2,317.99 871.6,317.44 872.0,318.62 872.4,317.29 872.8,317.83 873.2,317.54 873.6,319.57 874.0,319.34 874.4,319.02 874.8,319.68 875.2,319.62 875.6,320.36 876.0,320.44 876.4,320.44 876.8,320.27 877.2,319.92 877.6,321.59 878.0,320.24 878.4,320.97 878.8,320.4 879.2,320.52 879.6,321.6 880.0,321.98 880.4,322.03 880.8,321.86 881.2,321.87 881.6,321.62 882.0,321.95 882.4,322.71 882.8,322.71 883.2,322.62 883.6,322.39 884.0,322.6 884.4,323.45 884.8,322.76 885.2,323.58 885.6,322.43 886.0,323.27 886.4,321.08 886.8,321.11 887.2,321.05 887.6,320.62 888.0,321.33 888.4,321.68 888.8,321.52 889.2,321.59 889.6,321.94 890.0,321.82 890.4,322.58 890.8,323.02 891.2,323.36 891.6,323.3 892.0,324.44 892.4,323.89 892.8,324.12 893.2,325.45 893.6,326.06 894.0,325.85 894.4,326.16 894.8,326.58 895.2,327.45 895.6,327.58 896.0,327.49 896.4,328.17 896.8,328.48 897.2,328.04 897.6,328.72 898.0,329.14 898.4,329.59 898.8,330.07 899.2,330.59 899.6,330.94 900.0,331.19 900.4,331.2 900.8,332.23 901.2,332.11 901.6,332.22 902.0,333.21 902.4,333.08 902.8,333.58 903.2,333.86 903.6,334.11 904.0,334.44 904.4,335.5 904.8,335.7 905.2,335.48 905.6,336.3 906.0,336.43 906.4,336.99 906.8,337.3 907.2,337.66 907.6,337.41 908.0,338.81 908.4,338.9 908.8,339.19 909.2,339.42 909.6,339.81 910.0,340.37 910.4,340.02 910.8,340.56 911.2,340.86 911.6,341.17 912.0,341.62 912.4,342.25 912.8,342.13 913.2,342.89 913.6,343.21 914.0,343.84 914.4,344.4 914.8,344.56 915.2,344.49 915.6,345.23 916.0,345.47 916.4,345.87 916.8,345.72 917.2,346.28 917.6,346.54 918.0,347.21 918.4,347.61 918.8,347.57 919.2,347.28 919.6,347.47 920.0,347.56 920.4,347.42 920.8,347.52 921.2,348.13 921.6,348.76 922.0,349.44 922.4,349.24 922.5,349.8 922.5,469.5 957.2,469.5" fill="none" stroke="#000" stroke-width="1" stroke-linejoin="miter"/>
<polyline class="c" points="842.5,294.6 842.5,305.4 843.3,298 844.2,303 845,297.5" fill="none" stroke="#000" stroke-width="1" stroke-linejoin="miter"/>
<path class="c" fill="#000" d="M957.2 469V338L959 339.5L961.2 343V467.5L959.5 469Z"/>
<polyline class="c" points="963.8,337.2 964.3,330.2 965.2,330.2 966.1,336.5 967.4,350.5 968.3,369 969.3,369 969.5,298.4 969.8,298.92 970.2,300.23 970.6,298.03 971.0,297.0 971.4,298.72 971.8,298.93 972.2,298.59 972.6,298.58 973.0,297.89 973.4,297.33 973.8,297.05 974.2,297.41 974.6,297.14 975.0,298.19 975.4,297.78 975.8,295.95 976.2,297.59 976.6,296.8 977.0,297.7 977.4,297.92 977.8,296.93 978.2,294.68 978.6,296.75 979.0,294.61 979.4,297.32 979.8,295.17 980.2,292.33 980.6,297.15 981.0,293.76 981.4,295.26 981.8,294.12 982.2,294.49 982.6,294.11 983.0,295.32 983.4,294.32 983.8,294.91 984.2,295.18 984.6,293.04 985.0,295.87 985.4,294.38 985.8,293.09 986.2,294.0 986.6,295.4 987.0,295.51 987.4,293.97 987.8,294.7 988.2,294.82 988.6,295.55 989.0,294.48 989.4,295.5 989.8,293.79 990.2,293.94 990.6,295.21 991.0,295.27 991.4,294.56 991.8,295.16 992.2,294.79 992.6,295.31 993.0,295.67 993.4,295.08 993.8,295.36 994.2,294.24 994.6,294.09 995.0,292.45 995.4,294.98 995.8,294.63 996.2,295.09 996.6,292.89 997.0,294.16 997.4,294.09 997.8,292.95 998.2,295.44" fill="none" stroke="#000" stroke-width="1" stroke-linejoin="miter"/>
<polyline class="c" points="596,469.5 714.8,469.5 715.3,462 715.8,452.3 716.5,452.1 717.3,452.1 718.1,452.1 718.9,452.1 719.7,452.1 720.5,452.1 721.3,452.1 722.1,452.1 722.9,453.27 723.7,452.1 724.5,452.1 725.3,452.1 726.1,452.1 726.9,452.1 727.7,452.1 728.5,452.1 729.3,452.1 730.1,452.1 730.9,452.1 731.7,452.1 732.5,452.1 733.3,452.1 734.1,452.1 734.9,452.1 735.7,452.1 736.5,452.1 737.3,452.1 738.1,452.76 738.9,452.1 739.7,452.1 740.5,452.1 741.3,452.1 742.1,452.1 742.9,452.1 743.7,452.1 744.5,453.1 745.3,452.1 746.1,452.1 746.9,452.96 747.7,452.1 748.5,452.1 749.3,452.1 750.1,452.1 750.9,452.1 751.7,452.1 752.5,452.1 753.3,452.1 754.1,452.1 754.9,452.1 755.7,452.1 756.5,452.1 757.3,452.1 758.1,452.1 758.9,452.1 759.7,452.1 760.5,452.1 761.3,452.1 762.1,452.1 762.9,452.1 763.7,452.1 764.5,452.71 765.3,452.1 766.1,452.1 766.9,451.28 767.7,450.86 768.5,451.13 769.3,452.1 770.1,452.1 770.9,452.1 771.7,452.1 772.5,452.1 773.3,452.1 774.1,452.1 774.9,452.1 775.7,452.1 776.5,452.1 777.3,451.29 778.1,452.1 778.9,452.1 779.7,452.1 780.5,452.1 781.3,452.1 782.1,452.1 782.9,452.1 783.7,452.1 784.5,452.1 785.3,452.1 786.1,452.1 786.9,452.1 787.7,452.1 788.5,452.1 789.3,452.1 790.1,452.1 790.9,452.1 791.7,453.11 792.5,452.1 793.3,452.1 794.1,452.1 794.9,452.1 795.7,453.23 796.5,452.1 797.3,452.1 798.1,452.1 798.9,452.1 799.7,451.1 800.5,452.1 801.3,453.38 802.1,452.1 802.9,452.1 803.7,452.1 804.5,452.1 805.3,452.1 806.1,452.1 806.9,452.1 807.7,452.1 808.5,452.1 809.3,452.1 810.1,452.1 810.9,450.87 811.7,452.1 812.5,452.1 813.3,452.1 814.1,452.1 814.9,452.1 815.7,452.1 816.5,452.1 817.3,452.1 818.1,452.1 818.9,452.94 819.7,452.1 820.5,451.14 821.3,452.1 822.1,453.2 822.9,452.1 823.7,452.1 824.5,452.1 825.3,452.1 826.1,452.1 826.9,452.1 827.7,452.1 828.5,452.1 829.3,452.1 830.1,452.1 830.9,453.26 831.7,452.1 832.5,451.46 833.3,452.1 834.1,452.1 834.9,452.1 835.7,452.1 836.5,452.1 837.3,452.1 838.1,452.1 838.9,452.1 839.7,452.1 840.5,452.1 841.3,452.1 842.1,452.1 842.9,452.1 843.7,452.1 844.5,452.1 845.3,452.1 846.1,452.1 846.9,452.1 847.7,452.1 848.5,452.1 849.3,452.1 850.1,452.1 850.9,452.1 851.7,452.92 852.5,452.1 853.3,452.1 854.1,452.1 854.9,452.1 855.7,452.1 856.5,452.1 857.3,452.1 858.1,452.1 858.9,452.1 859.7,452.1 860.5,452.1 861.3,452.1 862.1,452.1 862.9,452.1 863.7,452.1 864.5,452.1 865.3,452.1 866.1,452.1 866.9,452.1 867.7,452.1 868.5,452.1 869.3,452.1 870.1,452.1 870.9,452.1 871.7,452.1 872.5,452.1 873.3,452.1 874.1,452.1 874.9,452.1 875.7,452.1 876.5,452.1 877.3,452.1 878.1,452.1 878.9,452.1 879.7,451.27 880.5,450.88 881.3,452.1 882.1,452.1 882.9,452.1 883.7,453.33 884.5,452.1 885.3,452.1 886.1,452.1 886.9,452.1 887.7,452.1 888.5,452.1 889.3,452.1 890.1,452.1 890.9,452.1 891.7,452.1 892.5,452.1 893.3,452.1 894.1,452.1 894.9,452.1 895.7,452.1 896.5,452.1 897.3,452.1 898.1,452.1 898.9,452.1 899.7,452.1 900.5,452.1 901.3,452.1 902.1,452.1 902.9,452.1 903.7,452.1 904.5,451.09 905.3,452.1 906.1,452.1 906.9,452.1 907.7,452.1 908.5,452.1 909.3,452.1 910.1,452.1 910.9,452.1 911.7,452.1 912.5,452.1 913.3,452.1 914.1,452.1 914.9,452.1 915.7,452.1 916.5,452.1 917.3,452.1 918.1,451.36 918.9,452.1 919.7,452.1 920.5,452.1 921.3,452.1 922.1,452.1 922.7,452.3 922.7,469.5 956.1,469.5 958.0,467 958.6,452.3 959.4,452.0 960.2,452.0 961.0,452.0 961.8,452.0 962.6,452.0 963.4,452.0 964.2,452.0 965.0,452.0 965.8,452.0 966.6,452.0 967.4,452.0 968.2,452.0 969.0,452.0 969.8,452.0 970.6,452.0 971.4,452.0 972.2,452.0 973.0,452.0 973.8,452.0 974.6,452.0 975.4,452.69 976.2,452.0 977.0,452.0 977.8,452.0 978.6,452.0 979.4,453.19 980.2,452.0 981.0,452.0 981.8,452.0 982.6,452.0 983.4,452.0 984.2,451.38 985.0,452.0 985.8,452.0 986.6,452.0 987.4,452.0 988.2,452.0 989.0,452.0 989.8,452.0 990.6,452.0 991.4,452.0 992.2,452.86 993.0,452.0 993.8,452.0 994.6,452.0 995.4,452.0 996.2,452.0 997.0,452.0 997.8,452.0 998.6,452.0" fill="none" stroke="#ff0000" stroke-width="1" stroke-linejoin="miter"/>
</g>
<rect x="591" y="469" width="5" height="1" fill="#000"/>
<text x="588.3" y="474.7" font-size="12" fill="#000" font-weight="bold" text-anchor="end" letter-spacing="-0.4">0</text>
<rect x="591" y="429" width="5" height="1" fill="#000"/>
<text x="588.3" y="434.9" font-size="12" fill="#000" font-weight="bold" text-anchor="end" letter-spacing="-0.4">5000</text>
<rect x="591" y="389" width="5" height="1" fill="#000"/>
<text x="588.3" y="395.1" font-size="12" fill="#000" font-weight="bold" text-anchor="end" letter-spacing="-0.4">10000</text>
<rect x="591" y="350" width="5" height="1" fill="#000"/>
<text x="588.3" y="355.3" font-size="12" fill="#000" font-weight="bold" text-anchor="end" letter-spacing="-0.4">15000</text>
<rect x="591" y="310" width="5" height="1" fill="#000"/>
<text x="588.3" y="315.5" font-size="12" fill="#000" font-weight="bold" text-anchor="end" letter-spacing="-0.4">20000</text>
<rect x="633" y="470" width="1" height="4" fill="#000"/>
<text x="632.9" y="488.6" font-size="12" fill="#000" font-weight="bold" text-anchor="middle" letter-spacing="-0.35">17:00</text>
<rect x="683" y="470" width="1" height="4" fill="#000"/>
<text x="683.2" y="488.6" font-size="12" fill="#000" font-weight="bold" text-anchor="middle" letter-spacing="-0.35">20:00</text>
<rect x="734" y="470" width="1" height="4" fill="#000"/>
<text x="733.6" y="488.6" font-size="12" fill="#000" font-weight="bold" text-anchor="middle" letter-spacing="-0.35">23:00</text>
<rect x="784" y="470" width="1" height="4" fill="#000"/>
<text x="783.9" y="488.6" font-size="12" fill="#000" font-weight="bold" text-anchor="middle" letter-spacing="-0.35">02:00</text>
<rect x="834" y="470" width="1" height="4" fill="#000"/>
<text x="834.2" y="488.6" font-size="12" fill="#000" font-weight="bold" text-anchor="middle" letter-spacing="-0.35">05:00</text>
<rect x="885" y="470" width="1" height="4" fill="#000"/>
<text x="884.5" y="488.6" font-size="12" fill="#000" font-weight="bold" text-anchor="middle" letter-spacing="-0.35">08:00</text>
<rect x="935" y="470" width="1" height="4" fill="#000"/>
<text x="934.9" y="488.6" font-size="12" fill="#000" font-weight="bold" text-anchor="middle" letter-spacing="-0.35">11:00</text>
<rect x="985" y="470" width="1" height="4" fill="#000"/>
<text x="985.2" y="488.6" font-size="12" fill="#000" font-weight="bold" text-anchor="middle" letter-spacing="-0.35">14:00</text>
<text transform="translate(542.9 461.85) rotate(-90)" font-size="12" fill="#000" font-weight="bold" letter-spacing="0.021">Luminosity / 1e30 cm-2s-1</text>
<rect x="524" y="494" width="492" height="25" fill="#c8d7ee"/>
<rect x="525" y="495" width="490" height="23" fill="#ffe792"/>
<rect x="532" y="506" width="17" height="1" fill="#0000ff"/>
<text x="556.38" y="509.7" font-size="9.8" fill="#000" font-weight="bold" letter-spacing="0.686">ATLAS</text>
<rect x="604" y="506" width="17" height="1" fill="#ff00ff"/>
<text x="628.6" y="509.7" font-size="9.8" fill="#000" font-weight="bold" letter-spacing="-0.5">ALICE</text>
<rect x="670" y="506" width="17" height="1" fill="#000"/>
<text x="694.12" y="509.7" font-size="9.8" fill="#000" font-weight="bold" letter-spacing="-0.9">CMS</text>
<rect x="726" y="506" width="17" height="1" fill="#ff0000"/>
<text x="749.25" y="509.7" font-size="9.8" fill="#000" font-weight="bold" letter-spacing="-0.367">LHCb</text>
<path fill="#0000ff" fill-rule="evenodd" d="M9 561H520V737H9Z M10 562H519V736H10Z"/>
<path fill="#0000ff" fill-rule="evenodd" d="M520 561H1031V737H520Z M521 562H1030V736H521Z"/>
<path fill="#0000ff" fill-rule="evenodd" d="M9 735H1031V776H9Z M10 736H1030V775H10Z"/>
<rect x="9" y="735" width="1022" height="2" fill="#0000ff"/>
<text x="525.2" y="553" font-size="17.6" fill="#fff" stroke="#fff" stroke-width="0.3" letter-spacing="-0.079">BIS status and SMP flags</text>
<text x="900.35" y="553" font-size="17.6" fill="#fff" stroke="#fff" stroke-width="0.3" letter-spacing="-0.45">B1</text>
<text x="965.2" y="553" font-size="17.6" fill="#fff" stroke="#fff" stroke-width="0.3" letter-spacing="-0.45">B2</text>
<text x="10.1" y="581" font-size="20.1" fill="#ff0" stroke="#ff0" stroke-width="0.25" letter-spacing="0.067">Comments (25-Oct-2025 12:40:44)</text>
<text x="150.3" y="632" font-size="20.1" fill="#fff" stroke="#fff" stroke-width="0.25" letter-spacing="0.053">*** STABLE BEAMS ***</text>
<text x="159.15" y="656" font-size="20.1" fill="#fff" stroke="#fff" stroke-width="0.25" letter-spacing="-0.08">beta* levelling IP 1/5</text>
<text x="165.3" y="680" font-size="20.1" fill="#fff" stroke="#fff" stroke-width="0.25" letter-spacing="-0.09">Sep. levelling IP 2/8</text>
<text x="185.1" y="728" font-size="20.1" fill="#fff" stroke="#fff" stroke-width="0.25" letter-spacing="-0.077">XRPs moving IN</text>
<text x="572.45" y="582" font-size="17.6" fill="#fff" stroke="#fff" stroke-width="0.3" letter-spacing="-0.019">Link Status of Beam Permits</text>
<rect x="878" y="566" width="58" height="20" fill="#00ff00"/>
<text x="889.0" y="582" font-size="17.6" fill="#000" stroke="#000" stroke-width="0.3" letter-spacing="0.133">true</text>
<rect x="950" y="566" width="58" height="20" fill="#00ff00"/>
<text x="961.0" y="582" font-size="17.6" fill="#000" stroke="#000" stroke-width="0.3" letter-spacing="0.133">true</text>
<text x="607.3" y="611" font-size="17.6" fill="#fff" stroke="#fff" stroke-width="0.3" letter-spacing="0.095">Global Beam Permit</text>
<rect x="878" y="595" width="58" height="20" fill="#00ff00"/>
<text x="889.0" y="611" font-size="17.6" fill="#000" stroke="#000" stroke-width="0.3" letter-spacing="0.133">true</text>
<rect x="950" y="595" width="58" height="20" fill="#00ff00"/>
<text x="961.0" y="611" font-size="17.6" fill="#000" stroke="#000" stroke-width="0.3" letter-spacing="0.133">true</text>
<text x="642.4" y="640" font-size="17.6" fill="#fff" stroke="#fff" stroke-width="0.3" letter-spacing="-0.132">Setup Beam</text>
<rect x="878" y="624" width="58" height="20" fill="#ff0000"/>
<text x="887.0" y="640" font-size="17.6" fill="#000" stroke="#000" stroke-width="0.3" letter-spacing="-0.25">false</text>
<rect x="950" y="624" width="58" height="20" fill="#ff0000"/>
<text x="959.0" y="640" font-size="17.6" fill="#000" stroke="#000" stroke-width="0.3" letter-spacing="-0.25">false</text>
<text x="628.05" y="669" font-size="17.6" fill="#fff" stroke="#fff" stroke-width="0.3" letter-spacing="0.008">Beam Presence</text>
<rect x="878" y="653" width="58" height="20" fill="#00ff00"/>
<text x="889.0" y="669" font-size="17.6" fill="#000" stroke="#000" stroke-width="0.3" letter-spacing="0.133">true</text>
<rect x="950" y="653" width="58" height="20" fill="#00ff00"/>
<text x="961.0" y="669" font-size="17.6" fill="#000" stroke="#000" stroke-width="0.3" letter-spacing="0.133">true</text>
<text x="564.9" y="697" font-size="17.6" fill="#fff" stroke="#fff" stroke-width="0.3" letter-spacing="0.178">Moveable Devices Allowed In</text>
<rect x="878" y="681" width="58" height="20" fill="#00ff00"/>
<text x="889.0" y="697" font-size="17.6" fill="#000" stroke="#000" stroke-width="0.3" letter-spacing="0.133">true</text>
<rect x="950" y="681" width="58" height="20" fill="#00ff00"/>
<text x="961.0" y="697" font-size="17.6" fill="#000" stroke="#000" stroke-width="0.3" letter-spacing="0.133">true</text>
<text x="635.95" y="726" font-size="17.6" fill="#fff" stroke="#fff" stroke-width="0.3" letter-spacing="-0.191">Stable Beams</text>
<rect x="878" y="710" width="58" height="20" fill="#00ff00"/>
<text x="889.0" y="726" font-size="17.6" fill="#000" stroke="#000" stroke-width="0.3" letter-spacing="0.133">true</text>
<rect x="950" y="710" width="58" height="20" fill="#00ff00"/>
<text x="961.0" y="726" font-size="17.6" fill="#000" stroke="#000" stroke-width="0.3" letter-spacing="0.133">true</text>
<text x="17.5" y="760" font-size="17.6" fill="#ff0" stroke="#ff0" stroke-width="0.3" letter-spacing="-0.128">AFS: 25ns_2460b_2448_2089_2227_144bpi_20inj_asym</text>
<text x="527.2" y="762" font-size="17.6" fill="#fff" stroke="#fff" stroke-width="0.3" letter-spacing="-0.091">PM Status B1</text>
<rect x="648" y="741" width="117" height="32" fill="#00ff00"/>
<text x="664.0" y="763" font-size="17.6" fill="#000" stroke="#000" stroke-width="0.3" letter-spacing="0.133">ENABLED</text>
<text x="781.05" y="762" font-size="17.6" fill="#fff" stroke="#fff" stroke-width="0.3" letter-spacing="-0.081">PM Status B2</text>
<rect x="902" y="741" width="125" height="32" fill="#00ff00"/>
<text x="921.85" y="763" font-size="17.6" fill="#000" stroke="#000" stroke-width="0.3" letter-spacing="0.116">ENABLED</text>
</svg>
</body></html>
